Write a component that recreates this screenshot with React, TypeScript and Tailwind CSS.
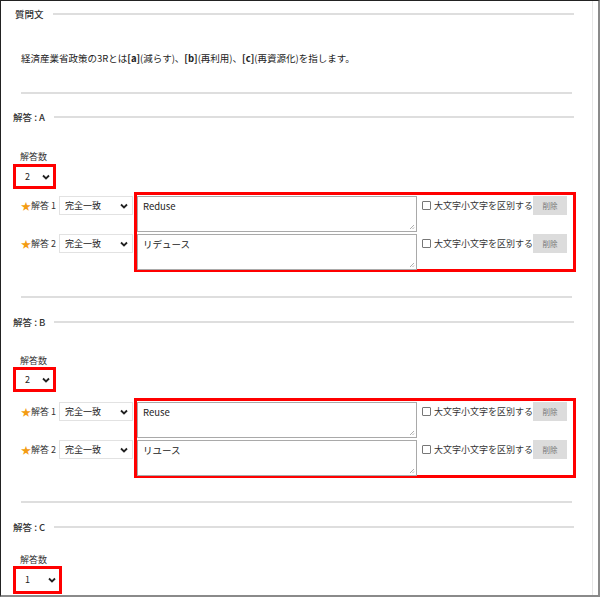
import React from 'react'

const font = { fontFamily: '"Noto Sans CJK JP", "Noto Sans", sans-serif' }

function Chevron() {
  return (
    <svg width="8" height="6" viewBox="0 0 8 6" className="shrink-0">
      <path d="M1 1.5 L4 4.5 L7 1.5" fill="none" stroke="#222" strokeWidth="1.8" />
    </svg>
  )
}

function SectionHeading({ label }: { label: string }) {
  return (
    <div className="flex items-center h-[14px]">
      <span className="text-[9.5px] leading-[14px] font-medium text-[#333] pr-[9px]">{label}</span>
      <div className="flex-1 h-[2px] bg-[#dedede] mr-[18px]" />
    </div>
  )
}

function CountSelect({ value, wide }: { value: string; wide?: boolean }) {
  return (
    <div
      className={`border-[3px] border-[#ff0000] bg-white flex items-center justify-between pl-[9px] pr-[3px] ${
        wide ? 'w-[49px] h-[28px]' : 'w-[43px] h-[25px]'
      }`}
    >
      <span className="text-[9px] text-[#222]">{value}</span>
      <Chevron />
    </div>
  )
}

function Answers({ values }: { values: string[] }) {
  return (
    <div className="flex ml-[8px]">
      <div className="flex flex-col gap-[2px] pt-[4px] w-[113px]">
        {values.map((_, i) => (
          <div key={i} className="h-[36px] flex items-start">
            <span className="shrink-0 w-[10px] text-[#f39c12] text-[10px] leading-[19px] text-center">★</span>
            <span className="shrink-0 text-[9px] leading-[19px] text-[#333] w-[28px]">解答 {i + 1}</span>
            <div className="w-[74px] h-[19px] border border-[#e2e2e2] bg-white flex items-center justify-between pl-[5px] pr-[4px]">
              <span className="text-[9px] text-[#222]">完全一致</span>
              <Chevron />
            </div>
          </div>
        ))}
      </div>
      <div className="border-[3px] border-[#ff0000] w-[442px] h-[80px] flex flex-col gap-[2px] pt-[1px] pr-[6px]">
        {values.map((v, i) => (
          <div key={i} className="flex items-start h-[36px]">
            <div className="relative w-[280px] h-[36px] border border-[#a9a9a9] bg-white pl-[5px] pt-[2px] text-[9.5px] text-[#222]">
              {v}
              <svg width="6" height="6" viewBox="0 0 6 6" className="absolute right-[1px] bottom-[1px]">
                <path d="M5 1 L1 5 M5 3.5 L3.5 5" stroke="#999" strokeWidth="0.8" />
              </svg>
            </div>
            <div className="flex items-center h-[19px] ml-[5px]">
              <div className="w-[9px] h-[9px] border border-[#777] rounded-[1px] bg-white mr-[3px]" />
              <span className="text-[9px] text-[#333] whitespace-nowrap">大文字小文字を区別する</span>
            </div>
            <div className="ml-auto w-[34px] h-[19px] bg-[#dcdcdc] flex items-center justify-center text-[7.5px] text-[#777]">
              削除
            </div>
          </div>
        ))}
      </div>
    </div>
  )
}

export default function App() {
  return (
    <div
      className="w-[600px] h-[597px] overflow-hidden bg-white border-l-[1px] border-t-[1px] border-[#222] border-r-2 border-b-2 border-r-[#8a8a8a] border-b-[#8a8a8a]"
      style={font}
    >
      <div className="w-[592px] h-full border-r border-[#e6e6e6] pl-[12px]">
        <div className="pt-[6px] pl-[2px]">
          <SectionHeading label="質問文" />
        </div>
        <p className="mt-[30px] ml-[8px] text-[9.5px] leading-[14px] text-[#222]">
          経済産業省政策の3Rとは<b>[a]</b>(減らす)、<b>[b]</b>(再利用)、<b>[c]</b>(再資源化)を指します。
        </p>
        <div className="mt-[27px] ml-[8px] mr-[20px] h-[2px] bg-[#dedede]" />

        <div className="mt-[16px]">
          <SectionHeading label="解答 : A" />
        </div>
        <div className="mt-[26px] ml-[7px] text-[9px] leading-[13px] text-[#333]">解答数</div>
        <div className="mt-[1px]">
          <CountSelect value="2" />
        </div>
        <div className="mt-[3px]">
          <Answers values={['Reduse', 'リデュース']} />
        </div>
        <div className="mt-[24px] ml-[8px] mr-[20px] h-[2px] bg-[#dedede]" />

        <div className="mt-[17px]">
          <SectionHeading label="解答 : B" />
        </div>
        <div className="mt-[25px] ml-[7px] text-[9px] leading-[13px] text-[#333]">解答数</div>
        <div>
          <CountSelect value="2" />
        </div>
        <div className="mt-[6px]">
          <Answers values={['Reuse', 'リユース']} />
        </div>
        <div className="mt-[23px] ml-[8px] mr-[20px] h-[2px] bg-[#dedede]" />

        <div className="mt-[17px]">
          <SectionHeading label="解答 : C" />
        </div>
        <div className="mt-[20px] ml-[7px] text-[9px] leading-[12px] text-[#333]">解答数</div>
        <div>
          <CountSelect value="1" wide />
        </div>
      </div>
    </div>
  )
}
